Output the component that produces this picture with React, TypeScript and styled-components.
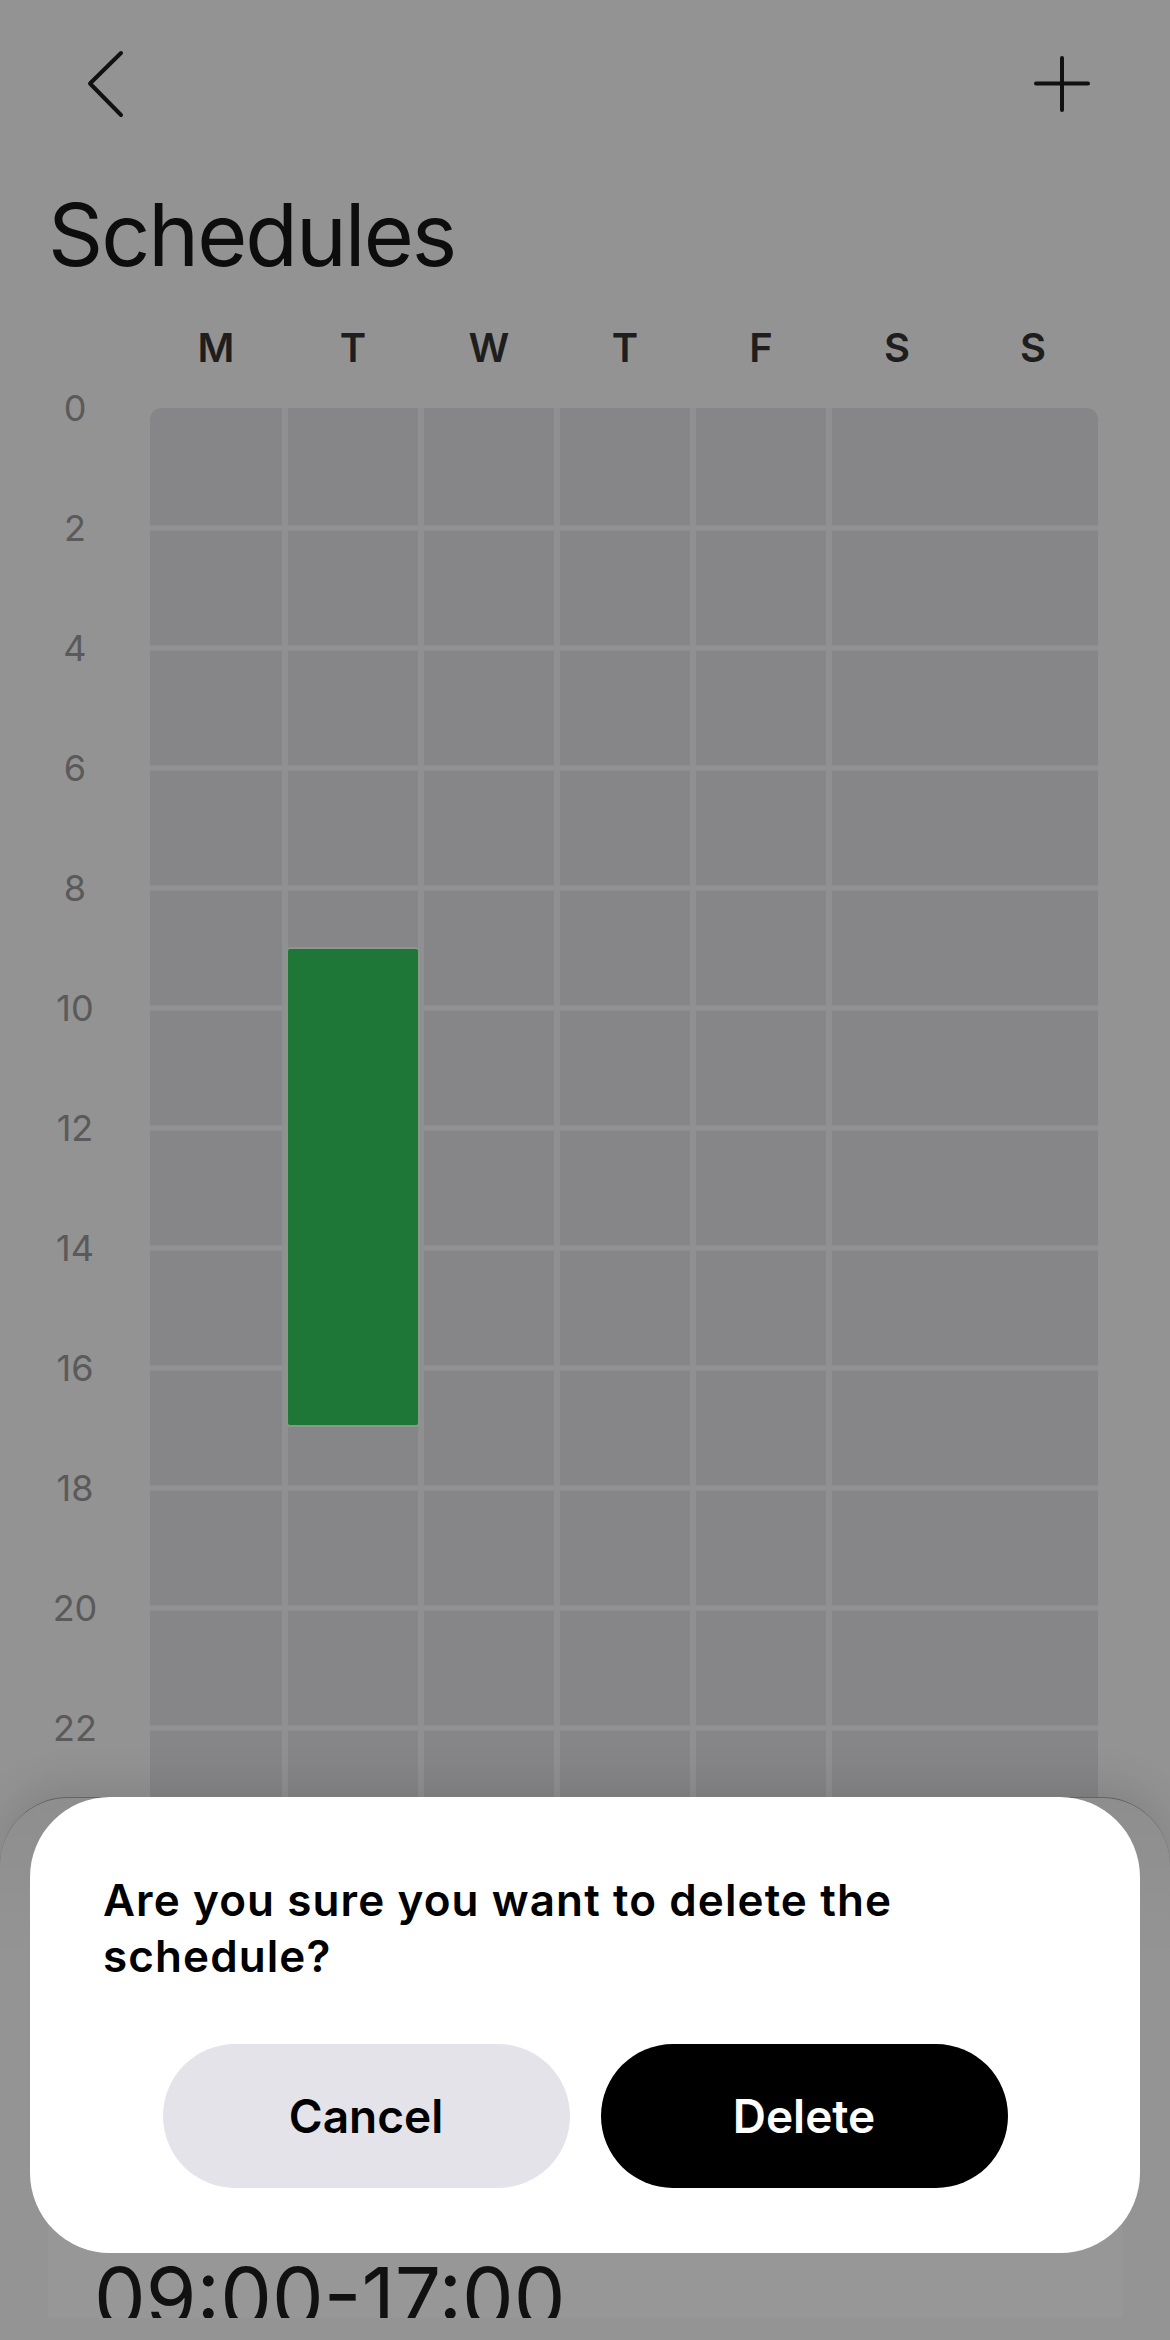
import React from "react";
import styled, { createGlobalStyle } from "styled-components";

const GlobalStyle = createGlobalStyle`
  html, body { margin: 0; padding: 0; background: #939393; }
  body { font-family: Inter, "Noto Sans", sans-serif; -webkit-font-smoothing: antialiased; }
  * { box-sizing: border-box; }
`;

const Screen = styled.div`
  position: relative;
  width: 1170px;
  height: 2340px;
  overflow: hidden;
  background: #939393;
`;

const Header = styled.header`
  display: flex;
  justify-content: space-between;
  align-items: center;
  height: 120px;
  padding: 48px 80px 0;
`;

const IconButton = styled.button`
  display: flex;
  align-items: center;
  justify-content: center;
  padding: 0;
  border: 0;
  background: none;
  color: #111;
`;

const Title = styled.h1`
  margin: 72px 0 0 48px;
  font-size: 86px;
  line-height: 86px;
  font-weight: 400;
  letter-spacing: -2px;
  color: #0d0d0d;
`;

const Calendar = styled.section`
  display: grid;
  grid-template-columns: 150px 948px;
  row-gap: 40px;
  margin-top: 50px;
`;

const DayRow = styled.div`
  grid-column: 2;
  display: grid;
  grid-template-columns: 132px repeat(6, 1fr);
  column-gap: 6px;
  height: 40px;
`;

const DayLabel = styled.div`
  text-align: center;
  font-size: 40px;
  line-height: 40px;
  font-weight: 600;
  color: #1e1e1e;
`;

const HourCol = styled.div`
  grid-column: 1;
  display: flex;
  flex-direction: column;
  margin-top: -18px;
`;

const HourLabel = styled.div`
  height: 120px;
  line-height: 36px;
  font-size: 36px;
  text-align: center;
  color: #5a5a5a;
`;

const Grid = styled.div`
  position: relative;
  grid-column: 2;
  display: grid;
  grid-template-columns: 132px repeat(6, 1fr);
  grid-template-rows: 117px repeat(11, 114px);
  gap: 6px;
  background: #909092;
  border-radius: 12px 12px 0 0;
  overflow: hidden;
`;

const Cell = styled.div<{ $span: number }>`
  background: #868688;
  grid-column: span ${(p) => p.$span};
`;

const EventBlock = styled.div`
  position: absolute;
  width: 134px;
  background: #1e7736;
  border: 2px solid #8b978d;
  border-radius: 4px;
`;

const Sheet = styled.div`
  position: absolute;
  left: 0;
  right: 0;
  top: 1797px;
  bottom: 0;
  display: flex;
  flex-direction: column;
  justify-content: flex-end;
  padding: 0 48px 22px;
  background: linear-gradient(#8e8e8e, #949494 30%);
  border-radius: 68px 68px 0 0;
  border-top: 1px solid rgba(40, 40, 40, 0.45);
  box-shadow: 0 -14px 40px rgba(0, 0, 0, 0.1);
`;

const TimeCard = styled.div`
  height: 320px;
  display: flex;
  align-items: flex-end;
  padding-left: 46px;
  background: #979797;
  overflow: hidden;
`;

const TimeText = styled.div`
  font-size: 82px;
  line-height: 82px;
  font-weight: 400;
  color: #111;
  margin-bottom: -21px;
`;

const Modal = styled.div`
  position: absolute;
  top: 1797px;
  left: 30px;
  width: 1110px;
  padding: 75px 73px 65px;
  background: #fff;
  border-radius: 80px;
`;

const Question = styled.p`
  margin: 0;
  max-width: 900px;
  font-size: 44px;
  line-height: 56px;
  font-weight: 600;
  letter-spacing: 1.1px;
  color: #000;
`;

const Actions = styled.div`
  display: flex;
  justify-content: center;
  gap: 31px;
  margin-top: 60px;
`;

const ActionButton = styled.button<{ $danger?: boolean }>`
  width: 407px;
  height: 144px;
  border: 0;
  border-radius: 72px;
  font-family: Inter, "Noto Sans", sans-serif;
  font-size: 46px;
  font-weight: 600;
  background: ${(p) => (p.$danger ? "#000" : "#e4e3e9")};
  color: ${(p) => (p.$danger ? "#fff" : "#000")};
`;

const days = ["M", "T", "W", "T", "F", "S", "S"];
const hours = [0, 2, 4, 6, 8, 10, 12, 14, 16, 18, 20, 22];
const HOUR_PX = 60;
const events = [{ day: 1, start: 9, end: 17 }];

export default function App() {
  return (
    <>
      <GlobalStyle />
      <Screen>
        <Header>
          <IconButton aria-label="Back">
            <svg width="44" height="72" viewBox="0 0 44 72" fill="none">
              <path d="M41 5 L10 35.5 L41 67" stroke="currentColor" strokeWidth="4" strokeLinecap="round" strokeLinejoin="round" />
            </svg>
          </IconButton>
          <IconButton aria-label="Add">
            <svg width="56" height="56" viewBox="0 0 56 56" fill="none">
              <path d="M28 2 V54 M2 27.5 H54" stroke="currentColor" strokeWidth="4" strokeLinecap="round" />
            </svg>
          </IconButton>
        </Header>
        <Title>Schedules</Title>
        <Calendar>
          <DayRow>
            {days.map((d, i) => (
              <DayLabel key={i}>{d}</DayLabel>
            ))}
          </DayRow>
          <HourCol>
            {hours.map((h) => (
              <HourLabel key={h}>{h}</HourLabel>
            ))}
          </HourCol>
          <Grid>
            {hours.map((h) =>
              [1, 1, 1, 1, 1, 2].map((s, i) => <Cell key={`${h}-${i}`} $span={s} />)
            )}
            {events.map((e, i) => (
              <EventBlock
                key={i}
                style={{
                  left: e.day === 0 ? -2 : 136 + (e.day - 1) * 136,
                  top: e.start * HOUR_PX - 1,
                  height: (e.end - e.start) * HOUR_PX,
                }}
              />
            ))}
          </Grid>
        </Calendar>
        <Sheet>
          <TimeCard>
            <TimeText>09:00-17:00</TimeText>
          </TimeCard>
        </Sheet>
        <Modal role="dialog">
          <Question>Are you sure you want to delete the schedule?</Question>
          <Actions>
            <ActionButton>Cancel</ActionButton>
            <ActionButton $danger>Delete</ActionButton>
          </Actions>
        </Modal>
      </Screen>
    </>
  );
}
